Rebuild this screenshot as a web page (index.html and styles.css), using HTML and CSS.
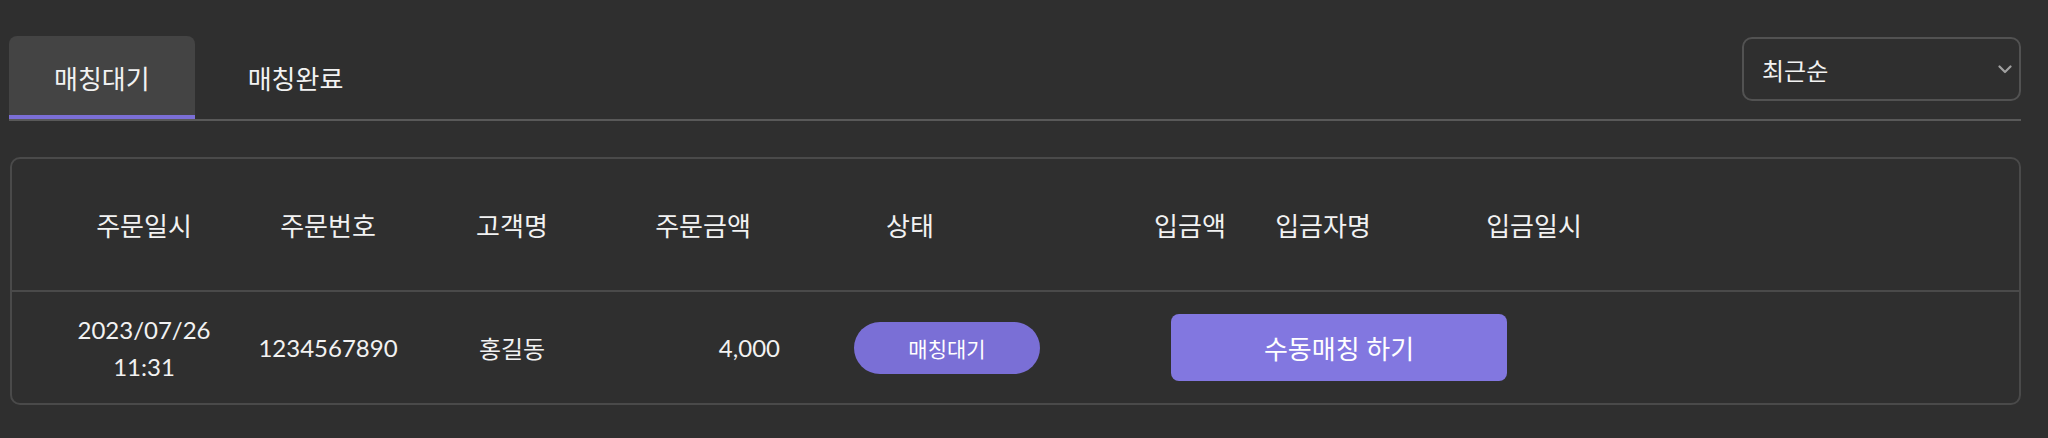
FILE: index.html
```html
<!DOCTYPE html>
<html lang="ko">
<head>
<meta charset="utf-8">
<title>매칭</title>
<link rel="stylesheet" href="styles.css">
</head>
<body>
<div class="page">
  <div class="topbar">
    <div class="tabs">
      <div class="tab active">매칭대기</div>
      <div class="tab">매칭완료</div>
    </div>
    <div class="select">
      <span>최근순</span>
      <svg class="chev" width="14" height="9" viewBox="0 0 14 9"><path d="M1.5 1.5 L7 7 L12.5 1.5" fill="none" stroke="#a0a0a0" stroke-width="2.2" stroke-linecap="round" stroke-linejoin="round"/></svg>
    </div>
  </div>
  <div class="table">
    <div class="row head">
      <div class="cell">주문일시</div>
      <div class="cell">주문번호</div>
      <div class="cell">고객명</div>
      <div class="cell">주문금액</div>
      <div class="cell">상태</div>
      <div class="cell spacer"></div>
      <div class="cell">입금액</div>
      <div class="cell">입금자명</div>
      <div class="cell">입금일시</div>
    </div>
    <div class="row data">
      <div class="cell date">2023/07/26<br>11:31</div>
      <div class="cell">1234567890</div>
      <div class="cell">홍길동</div>
      <div class="cell amount">4,000</div>
      <div class="cell status"><span class="pill">매칭대기</span></div>
      <div class="cell action"><button class="btn">수동매칭 하기</button></div>
    </div>
  </div>
</div>
</body>
</html>
```
FILE: styles.css
```css
html, body {
  margin: 0;
  padding: 0;
  background: #2f2f2f;
}
body {
  font-family: "Lato", "Noto Sans CJK KR", sans-serif;
  color: #f2f2f2;
}
.page {
  padding: 36px 27px 0 9px;
}
.topbar {
  display: flex;
  justify-content: space-between;
  align-items: flex-start;
  border-bottom: 2px solid #595959;
}
.tabs {
  display: flex;
  gap: 8px;
}
.tab {
  box-sizing: content-box;
  height: 76px;
  padding: 3px 45px 0;
  display: flex;
  align-items: center;
  font-size: 26px;
  border-bottom: 4px solid transparent;
  border-radius: 8px 8px 0 0;
}
.tab.active {
  background: #444444;
  border-bottom-color: #7b6fd6;
}
.select {
  margin-top: 1px;
  width: 279px;
  height: 64px;
  box-sizing: border-box;
  border: 2px solid #525252;
  border-radius: 10px;
  display: flex;
  align-items: center;
  justify-content: space-between;
  padding: 0 7px 0 18px;
  font-size: 24px;
}
.chev {
  display: block;
}
.table {
  margin: 36px 0 0 1px;
  border: 2px solid #4a4a4a;
  border-radius: 10px;
}
.row {
  display: grid;
  grid-template-columns: 184px 184px 184px 198px 216px 106px 132px 134px 288px 1fr;
  padding-left: 40px;
  align-items: center;
  font-size: 24px;
}
.row.head {
  height: 131px;
  border-bottom: 2px solid #4a4a4a;
  font-size: 26px;
}
.row.data {
  height: 111px;
}
.cell {
  text-align: center;
  white-space: nowrap;
}
.date {
  line-height: 37px;
}
.amount {
  text-align: right;
  padding-right: 22px;
}
.status {
  grid-column: 5 / 7;
  text-align: left;
  padding-left: 52px;
}
.pill {
  display: inline-flex;
  align-items: center;
  justify-content: center;
  width: 186px;
  height: 52px;
  border-radius: 26px;
  background: #7a6fd6;
  font-size: 21px;
  color: #fff;
}
.action {
  grid-column: 7 / 10;
  text-align: left;
  padding-left: 47px;
}
.btn {
  width: 336px;
  height: 67px;
  border: none;
  border-radius: 8px;
  background: #8277e0;
  color: #fff;
  font-family: "Lato", "Noto Sans CJK KR", sans-serif;
  font-size: 26px;
  padding: 0;
  display: block;
}
```
